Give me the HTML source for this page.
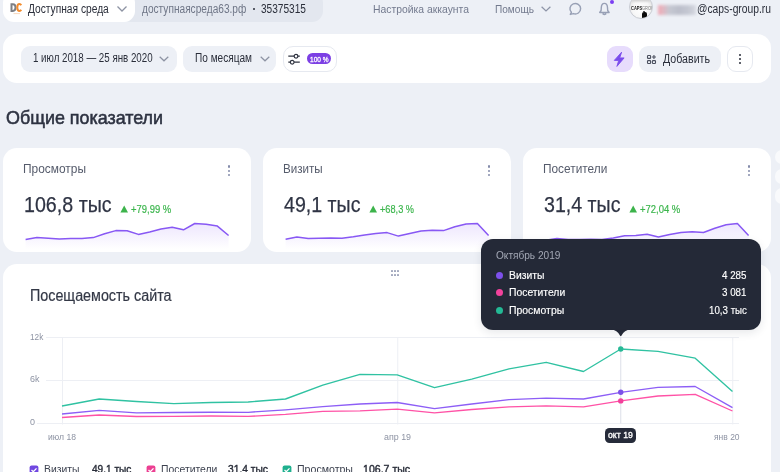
<!DOCTYPE html>
<html><head><meta charset="utf-8"><style>
html,body{margin:0;padding:0;}
body{width:780px;height:472px;overflow:hidden;position:relative;background:#edf0f6;font-family:"Liberation Sans", sans-serif;}
</style></head><body>
<div style="position:absolute;left:120px;top:-8px;width:203px;height:29.5px;background:#e3e7ef;border-radius:11px;"></div>
<div style="position:absolute;left:3px;top:-8px;width:132px;height:30.1px;background:#ffffff;border-radius:11px;"></div>
<svg style="position:absolute;left:9px;top:2px" width="16" height="14" viewBox="0 0 16 14"><path d="M2.5 2.2 H3.9 C5.7 2.2 6.5 3.6 6.5 5.55 C6.5 7.5 5.7 8.9 3.9 8.9 H2.5 Z" fill="none" stroke="#7d7f84" stroke-width="2"/><path d="M12.2 3.3 C11.8 2.5 11.2 2.1 10.4 2.1 C9 2.1 8.3 3.5 8.3 5.55 C8.3 7.6 9 9 10.4 9 C11.2 9 11.8 8.6 12.2 7.8" fill="none" stroke="#f38b2c" stroke-width="2"/><path d="M4.5 11.6 H11" stroke="#f7c9a0" stroke-width="0.7"/></svg>
<svg style="position:absolute;left:116px;top:5px" width="12" height="8" viewBox="0 0 12 8"><path d="M1.5 1.5 L6 6 L10.5 1.5" fill="none" stroke="#8d93a3" stroke-width="1.3"/></svg>
<div style="position:absolute;left:252.8px;top:7.5px;width:2.3999999999999773px;height:2.4000000000000004px;background:#2a2e3a;border-radius:2px;"></div>
<svg style="position:absolute;left:540.3px;top:5px" width="12" height="8" viewBox="0 0 12 8"><path d="M1.6 1.7 L6 6 L10.4 1.7" fill="none" stroke="#8e95a8" stroke-width="1.25"/></svg>
<svg style="position:absolute;left:0;top:0" width="780" height="30"><path d="M573.4 13.6 A5.35 5.25 0 1 0 571.4 12.3 L570.3 14.4 Z" fill="none" stroke="#98a0b5" stroke-width="1.45" stroke-linejoin="round"/></svg>
<svg style="position:absolute;left:0;top:0" width="780" height="30"><path d="M604.4 3.4 C602.3 3.4 601.4 5.3 601.3 7.6 L601.1 10.5 L599.7 12.5 L609.1 12.5 L607.7 10.5 L607.5 7.6 C607.4 5.3 606.5 3.4 604.4 3.4 Z M603 13.9 Q604.4 15.1 605.8 13.9" fill="none" stroke="#98a0b5" stroke-width="1.4" stroke-linejoin="round" stroke-linecap="round"/></svg>
<div style="position:absolute;left:610px;top:0px;width:4.399999999999977px;height:4.4px;background:#7b3ff2;border-radius:3px;"></div>
<div style="position:absolute;left:629.3px;top:-5px;width:24px;height:24px;border-radius:50%;box-sizing:border-box;border:0.8px solid #c9ccd3;background:radial-gradient(circle at 50% 60%, #ffffff 0%, #f6f6f6 50%, #d6d6d6 88%, #b8b8b8 100%);overflow:hidden"><div style="position:absolute;left:0;top:0;width:24px;height:7px;background:linear-gradient(#a8a8a8 0%,#dcdcdc 70%,rgba(255,255,255,0) 100%)"></div><div style="position:absolute;left:1px;top:9.2px;font-size:5px;font-weight:bold;color:#1a1a1a;white-space:nowrap;transform:scaleX(0.8);transform-origin:0 0;filter:blur(0.25px)">CAPS</div><div style="position:absolute;left:11.5px;top:9.4px;font-size:5px;color:#777;white-space:nowrap;transform:scaleX(0.8);transform-origin:0 0;filter:blur(0.25px)">GROUP</div><div style="position:absolute;left:13.2px;top:14.6px;width:1.6px;height:1.6px;background:#444;border-radius:50%"></div><div style="position:absolute;left:11.8px;top:16.4px;width:4.6px;height:7px;background:#0a0a0a;border-radius:2px 2px 0 0"></div></div>
<div style="position:absolute;left:658px;top:4.5px;width:38px;height:10px;background:linear-gradient(90deg,#f2a4b0 0%,#e3b3be 12%,#c4c6d0 30%,#b9bcc8 55%,#c3c6d1 80%,#d5d8e0 100%);filter:blur(1.6px);opacity:0.95"></div>
<div style="position:absolute;left:3px;top:34px;width:768px;height:49px;background:#ffffff;border-radius:14px;"></div>
<div style="position:absolute;left:21px;top:46px;width:156px;height:26px;background:#edf0f6;border-radius:9px;"></div>
<svg style="position:absolute;left:158px;top:55px" width="12" height="8" viewBox="0 0 12 8"><path d="M1.7 1.7 L6 5.8 L10.3 1.7" fill="none" stroke="#8d93a3" stroke-width="1.2"/></svg>
<div style="position:absolute;left:183.3px;top:46px;width:93.09999999999997px;height:26px;background:#edf0f6;border-radius:9px;"></div>
<svg style="position:absolute;left:258.5px;top:55px" width="12" height="8" viewBox="0 0 12 8"><path d="M1.7 1.7 L6 5.8 L10.3 1.7" fill="none" stroke="#8d93a3" stroke-width="1.2"/></svg>
<div style="position:absolute;left:283px;top:46.2px;width:54.30000000000001px;height:25.39999999999999px;background:#ffffff;border-radius:10px;box-sizing:border-box;border:1px solid #e6e9f0"></div>
<svg style="position:absolute;left:287px;top:52px" width="15" height="14" viewBox="0 0 15 14"><path d="M1.3 4.2 H12.8 M1.3 10.2 H12.8" stroke="#2f3340" stroke-width="1.2"/><circle cx="9" cy="4.2" r="1.85" fill="#fff" stroke="#2f3340" stroke-width="1.2"/><circle cx="5.2" cy="10.2" r="1.85" fill="#fff" stroke="#2f3340" stroke-width="1.2"/></svg>
<div style="position:absolute;left:306.9px;top:53.2px;width:24.30000000000001px;height:10.699999999999996px;background:#7c3fe4;border-radius:6px;"></div>
<div style="position:absolute;left:606.7px;top:45.9px;width:25.899999999999977px;height:25.699999999999996px;background:#e7dcfc;border-radius:9px;"></div>
<svg style="position:absolute;left:0;top:0" width="780" height="90"><path d="M621.6 52.2 L614.3 60.4 L618.7 60.4 L616.9 66.4 L624.1 57.9 L619.7 57.9 Z" fill="#7a4cec" stroke="#7a4cec" stroke-width="0.9" stroke-linejoin="round"/></svg>
<div style="position:absolute;left:638.5px;top:46px;width:82.10000000000002px;height:25.599999999999994px;background:#edf0f6;border-radius:9px;"></div>
<svg style="position:absolute;left:0;top:0" width="780" height="90"><g fill="none" stroke="#4a4f5e" stroke-width="1.1"><rect x="647.5" y="55.5" width="3.1" height="2.9" rx="0.7"/><rect x="647.5" y="60.6" width="3.1" height="2.9" rx="0.7"/><rect x="652.4" y="60.6" width="3.1" height="2.9" rx="0.7"/><path d="M653.95 55 V59 M651.95 57 H655.95"/></g></svg>
<div style="position:absolute;left:727.3px;top:46px;width:25.600000000000023px;height:25.5px;background:#ffffff;border-radius:9px;box-sizing:border-box;border:1px solid #e6e9f0"></div>
<div style="position:absolute;left:739.3px;top:54.1px;width:2.2000000000000455px;height:2.200000000000003px;background:#2a2e3a;border-radius:2px;"></div>
<div style="position:absolute;left:739.3px;top:58.1px;width:2.2000000000000455px;height:2.200000000000003px;background:#2a2e3a;border-radius:2px;"></div>
<div style="position:absolute;left:739.3px;top:62.3px;width:2.2000000000000455px;height:2.200000000000003px;background:#2a2e3a;border-radius:2px;"></div>
<div style="position:absolute;left:3px;top:148px;width:248px;height:104.4px;background:#ffffff;border-radius:14px;"></div>
<svg style="position:absolute;left:120.1px;top:205px" width="9" height="8" viewBox="0 0 9 8"><path d="M4.2 0.6 L8 7.4 L0.4 7.4 Z" fill="#3cb34b"/></svg>
<div style="position:absolute;left:227.9px;top:165.25px;width:2.299999999999983px;height:2.3000000000000114px;background:#858cab;border-radius:2px;"></div>
<div style="position:absolute;left:227.9px;top:169.65px;width:2.299999999999983px;height:2.3000000000000114px;background:#858cab;border-radius:2px;"></div>
<div style="position:absolute;left:227.9px;top:173.85px;width:2.299999999999983px;height:2.3000000000000114px;background:#858cab;border-radius:2px;"></div>
<svg style="position:absolute;left:0;top:0" width="780" height="472"><defs><linearGradient id="g3" x1="0" y1="0" x2="0" y2="1"><stop offset="0" stop-color="#8a5cf5" stop-opacity="0.15"/><stop offset="0.55" stop-color="#8a5cf5" stop-opacity="0.07"/><stop offset="1" stop-color="#8a5cf5" stop-opacity="0"/></linearGradient></defs><path d="M25.6 239.5 L36.9 237.6 L48.2 238.3 L59.4 238.9 L70.7 238.5 L82.0 238.4 L93.3 237.6 L104.6 233.7 L115.8 230.6 L127.1 230.7 L138.4 234.4 L149.7 232.0 L161.0 229.1 L172.2 227.2 L183.5 229.8 L194.8 223.5 L206.1 224.2 L217.4 226.1 L228.6 235.5 L228.6 249 L25.6 249 Z" fill="url(#g3)"/><path d="M25.6 239.5 L36.9 237.6 L48.2 238.3 L59.4 238.9 L70.7 238.5 L82.0 238.4 L93.3 237.6 L104.6 233.7 L115.8 230.6 L127.1 230.7 L138.4 234.4 L149.7 232.0 L161.0 229.1 L172.2 227.2 L183.5 229.8 L194.8 223.5 L206.1 224.2 L217.4 226.1 L228.6 235.5" fill="none" stroke="#8858f4" stroke-width="1.5" stroke-linejoin="round"/></svg>
<div style="position:absolute;left:263px;top:148px;width:248px;height:104.4px;background:#ffffff;border-radius:14px;"></div>
<svg style="position:absolute;left:369.0px;top:205px" width="9" height="8" viewBox="0 0 9 8"><path d="M4.2 0.6 L8 7.4 L0.4 7.4 Z" fill="#3cb34b"/></svg>
<div style="position:absolute;left:487.9px;top:165.25px;width:2.3000000000000114px;height:2.3000000000000114px;background:#858cab;border-radius:2px;"></div>
<div style="position:absolute;left:487.9px;top:169.65px;width:2.3000000000000114px;height:2.3000000000000114px;background:#858cab;border-radius:2px;"></div>
<div style="position:absolute;left:487.9px;top:173.85px;width:2.3000000000000114px;height:2.3000000000000114px;background:#858cab;border-radius:2px;"></div>
<svg style="position:absolute;left:0;top:0" width="780" height="472"><defs><linearGradient id="g263" x1="0" y1="0" x2="0" y2="1"><stop offset="0" stop-color="#8a5cf5" stop-opacity="0.15"/><stop offset="0.55" stop-color="#8a5cf5" stop-opacity="0.07"/><stop offset="1" stop-color="#8a5cf5" stop-opacity="0"/></linearGradient></defs><path d="M285.6 239.2 L296.9 237.1 L308.2 238.5 L319.4 238.3 L330.7 238.1 L342.0 238.2 L353.3 236.8 L364.6 234.9 L375.8 233.5 L387.1 232.6 L398.4 236.1 L409.7 233.5 L421.0 230.9 L432.2 230.2 L443.5 230.6 L454.8 226.8 L466.1 224.0 L477.4 223.5 L488.6 235.6 L488.6 249 L285.6 249 Z" fill="url(#g263)"/><path d="M285.6 239.2 L296.9 237.1 L308.2 238.5 L319.4 238.3 L330.7 238.1 L342.0 238.2 L353.3 236.8 L364.6 234.9 L375.8 233.5 L387.1 232.6 L398.4 236.1 L409.7 233.5 L421.0 230.9 L432.2 230.2 L443.5 230.6 L454.8 226.8 L466.1 224.0 L477.4 223.5 L488.6 235.6" fill="none" stroke="#8858f4" stroke-width="1.5" stroke-linejoin="round"/></svg>
<div style="position:absolute;left:523px;top:148px;width:248px;height:104.4px;background:#ffffff;border-radius:14px;"></div>
<svg style="position:absolute;left:629.0px;top:205px" width="9" height="8" viewBox="0 0 9 8"><path d="M4.2 0.6 L8 7.4 L0.4 7.4 Z" fill="#3cb34b"/></svg>
<div style="position:absolute;left:747.9px;top:165.25px;width:2.300000000000068px;height:2.3000000000000114px;background:#858cab;border-radius:2px;"></div>
<div style="position:absolute;left:747.9px;top:169.65px;width:2.300000000000068px;height:2.3000000000000114px;background:#858cab;border-radius:2px;"></div>
<div style="position:absolute;left:747.9px;top:173.85px;width:2.300000000000068px;height:2.3000000000000114px;background:#858cab;border-radius:2px;"></div>
<svg style="position:absolute;left:0;top:0" width="780" height="472"><defs><linearGradient id="g523" x1="0" y1="0" x2="0" y2="1"><stop offset="0" stop-color="#8a5cf5" stop-opacity="0.15"/><stop offset="0.55" stop-color="#8a5cf5" stop-opacity="0.07"/><stop offset="1" stop-color="#8a5cf5" stop-opacity="0"/></linearGradient></defs><path d="M545.6 240.3 L556.9 238.5 L568.2 239.6 L579.4 239.5 L590.7 239.2 L602.0 239.5 L613.3 238.1 L624.6 235.8 L635.8 235.5 L647.1 234.3 L658.4 237.0 L669.7 234.5 L681.0 232.5 L692.2 231.8 L703.5 232.5 L714.8 228.3 L726.1 224.7 L737.4 223.5 L748.6 235.6 L748.6 249 L545.6 249 Z" fill="url(#g523)"/><path d="M545.6 240.3 L556.9 238.5 L568.2 239.6 L579.4 239.5 L590.7 239.2 L602.0 239.5 L613.3 238.1 L624.6 235.8 L635.8 235.5 L647.1 234.3 L658.4 237.0 L669.7 234.5 L681.0 232.5 L692.2 231.8 L703.5 232.5 L714.8 228.3 L726.1 224.7 L737.4 223.5 L748.6 235.6" fill="none" stroke="#8858f4" stroke-width="1.5" stroke-linejoin="round"/></svg>
<div style="position:absolute;left:775px;top:149.5px;width:25px;height:14.300000000000011px;background:#f9fafc;border-radius:7px;"></div>
<div style="position:absolute;left:775px;top:168.6px;width:25px;height:15.0px;background:#f9fafc;border-radius:7px;"></div>
<div style="position:absolute;left:775px;top:187.8px;width:25px;height:16.5px;background:#f9fafc;border-radius:7px;"></div>
<div style="position:absolute;left:3px;top:264px;width:768px;height:256px;background:#ffffff;border-radius:14px;"></div>
<div style="position:absolute;left:391.2px;top:269.9px;width:2.0px;height:2.0px;background:#a2a8be;border-radius:0.6px;"></div>
<div style="position:absolute;left:391.2px;top:273.8px;width:2.0px;height:2.0px;background:#a2a8be;border-radius:0.6px;"></div>
<div style="position:absolute;left:394.1px;top:269.9px;width:2.0px;height:2.0px;background:#a2a8be;border-radius:0.6px;"></div>
<div style="position:absolute;left:394.1px;top:273.8px;width:2.0px;height:2.0px;background:#a2a8be;border-radius:0.6px;"></div>
<div style="position:absolute;left:397px;top:269.9px;width:2px;height:2.0px;background:#a2a8be;border-radius:0.6px;"></div>
<div style="position:absolute;left:397px;top:273.8px;width:2px;height:2.0px;background:#a2a8be;border-radius:0.6px;"></div>
<svg style="position:absolute;left:0;top:0" width="780" height="472"><path d="M46 337.5 H739" stroke="#edeff4" stroke-width="1"/><path d="M46 380.5 H739" stroke="#edeff4" stroke-width="1"/><path d="M37 423.5 H739" stroke="#edeff4" stroke-width="1"/><path d="M62.50 337 V424.5" stroke="#edeff4" stroke-width="1"/><path d="M397.75 337 V424.5" stroke="#edeff4" stroke-width="1"/><path d="M732.75 337 V424.5" stroke="#edeff4" stroke-width="1"/><path d="M620.75 337 V423.5" stroke="#dcdfe8" stroke-width="1"/><path d="M62.0 406.0 L99.2 399.0 L136.5 401.5 L173.8 403.6 L211.0 402.5 L248.2 402.0 L285.5 399.0 L322.8 385.2 L360.0 374.4 L397.2 374.8 L434.5 387.7 L471.8 379.2 L509.0 368.8 L546.2 362.3 L583.5 371.5 L620.8 349.0 L658.0 351.3 L695.2 358.2 L732.5 391.6" fill="none" stroke="#30c2a2" stroke-width="1.35" stroke-linejoin="round"/><path d="M62.0 414.0 L99.2 410.4 L136.5 412.8 L173.8 412.5 L211.0 412.2 L248.2 412.3 L285.5 409.8 L322.8 406.6 L360.0 404.0 L397.2 402.5 L434.5 408.6 L471.8 404.0 L509.0 399.6 L546.2 398.2 L583.5 399.0 L620.8 392.3 L658.0 387.4 L695.2 386.5 L732.5 407.7" fill="none" stroke="#8d5ef6" stroke-width="1.35" stroke-linejoin="round"/><path d="M62.0 417.5 L99.2 415.0 L136.5 416.5 L173.8 416.3 L211.0 416.0 L248.2 416.4 L285.5 414.4 L322.8 411.3 L360.0 410.9 L397.2 409.2 L434.5 412.9 L471.8 409.5 L509.0 406.8 L546.2 405.8 L583.5 406.8 L620.8 400.9 L658.0 396.0 L695.2 394.3 L732.5 411.0" fill="none" stroke="#ff52a6" stroke-width="1.35" stroke-linejoin="round"/><circle cx="620.75" cy="349.0" r="2.7" fill="#27b996"/><circle cx="620.75" cy="392.3" r="2.7" fill="#7c50e8"/><circle cx="620.75" cy="400.9" r="2.7" fill="#f2409b"/></svg>
<div style="position:absolute;left:605.2px;top:428.1px;width:31.299999999999955px;height:14.899999999999977px;background:#262b3a;border-radius:4.5px;"></div>
<svg style="position:absolute;left:29.2px;top:465px" width="10" height="10" viewBox="0 0 10 10"><rect x="0.6" y="0.6" width="8.8" height="8.8" rx="2" fill="#7047e0"/><path d="M2.5 5 L4.3 6.7 L7.5 3.4" fill="none" stroke="#fff" stroke-width="1.3"/></svg>
<svg style="position:absolute;left:145.8px;top:465px" width="10" height="10" viewBox="0 0 10 10"><rect x="0.6" y="0.6" width="8.8" height="8.8" rx="2" fill="#ec3f92"/><path d="M2.5 5 L4.3 6.7 L7.5 3.4" fill="none" stroke="#fff" stroke-width="1.3"/></svg>
<svg style="position:absolute;left:281.5px;top:465px" width="10" height="10" viewBox="0 0 10 10"><rect x="0.6" y="0.6" width="8.8" height="8.8" rx="2" fill="#1fb08e"/><path d="M2.5 5 L4.3 6.7 L7.5 3.4" fill="none" stroke="#fff" stroke-width="1.3"/></svg>
<div style="position:absolute;left:481.4px;top:238.5px;width:280px;height:91.4px;background:#242937;border-radius:12px;box-shadow:0 3px 8px rgba(30,35,60,0.10)"></div>
<svg style="position:absolute;left:0;top:0" width="780" height="472"><path d="M610.8 329.4 Q617.4 329.9 619.8 335.3 Q620.75 337.2 621.7 335.3 Q624.1 329.9 630.7 329.4 Z" fill="#242937"/></svg>
<div style="position:absolute;left:495.8px;top:271.8px;width:7.0px;height:7.0px;background:#7d50ea;border-radius:4px;"></div>
<div style="position:absolute;left:495.8px;top:289.2px;width:7.0px;height:7.0px;background:#f2429c;border-radius:4px;"></div>
<div style="position:absolute;left:495.8px;top:306.9px;width:7.0px;height:7.0px;background:#23b995;border-radius:4px;"></div>
<div style="position:absolute;left:27.9px;top:3px;font-size:12px;line-height:12px;font-weight:400;color:#2a2e3a;white-space:nowrap;transform:scaleX(0.8508);transform-origin:0 0;">Доступная среда</div>
<div style="position:absolute;left:141.7px;top:3px;font-size:12px;line-height:12px;font-weight:400;color:#6f7687;white-space:nowrap;transform:scaleX(0.8439);transform-origin:0 0;">доступнаясреда63.рф</div>
<div style="position:absolute;left:261px;top:3px;font-size:12px;line-height:12px;font-weight:400;color:#2a2e3a;white-space:nowrap;transform:scaleX(0.8428);transform-origin:0 0;">35375315</div>
<div style="position:absolute;left:372.7px;top:4px;font-size:11.5px;line-height:11.5px;font-weight:400;color:#737a8e;white-space:nowrap;transform:scaleX(0.9021);transform-origin:0 0;">Настройка аккаунта</div>
<div style="position:absolute;left:495px;top:4px;font-size:11.5px;line-height:11.5px;font-weight:400;color:#737a8e;white-space:nowrap;transform:scaleX(0.8779);transform-origin:0 0;">Помощь</div>
<div style="position:absolute;left:696.5px;top:3px;font-size:12px;line-height:12px;font-weight:400;color:#2a2e3a;white-space:nowrap;transform:scaleX(0.8581);transform-origin:0 0;">@caps-group.ru</div>
<div style="position:absolute;left:32.7px;top:52px;font-size:12px;line-height:12px;font-weight:400;color:#2a2e3a;white-space:nowrap;transform:scaleX(0.8116);transform-origin:0 0;">1 июл 2018 — 25 янв 2020</div>
<div style="position:absolute;left:195px;top:52px;font-size:12px;line-height:12px;font-weight:400;color:#2a2e3a;white-space:nowrap;transform:scaleX(0.8400);transform-origin:0 0;">По месяцам</div>
<div style="position:absolute;left:309.8px;top:56px;font-size:8px;line-height:8px;font-weight:400;color:#ffffff;white-space:nowrap;transform:scaleX(0.8154);transform-origin:0 0;-webkit-text-stroke:0.3px #ffffff;">100 %</div>
<div style="position:absolute;left:663px;top:53px;font-size:12px;line-height:12px;font-weight:400;color:#2a2e3a;white-space:nowrap;transform:scaleX(0.8860);transform-origin:0 0;">Добавить</div>
<div style="position:absolute;left:6px;top:108px;font-size:19px;line-height:19px;font-weight:400;color:#2d3241;white-space:nowrap;transform:scaleX(0.9419);transform-origin:0 0;-webkit-text-stroke:0.55px #2d3241;">Общие показатели</div>
<div style="position:absolute;left:23.2px;top:163px;font-size:12.5px;line-height:12.5px;font-weight:400;color:#555b6b;white-space:nowrap;transform:scaleX(0.9534);transform-origin:0 0;">Просмотры</div>
<div style="position:absolute;left:24.2px;top:194px;font-size:22.5px;line-height:22.5px;font-weight:400;color:#2f3444;white-space:nowrap;transform:scaleX(0.8734);transform-origin:0 0;-webkit-text-stroke:0.25px #2f3444;">106,8 тыс</div>
<div style="position:absolute;left:130.6px;top:204px;font-size:11.5px;line-height:11.5px;font-weight:400;color:#3bb54c;white-space:nowrap;transform:scaleX(0.8217);transform-origin:0 0;-webkit-text-stroke:0.2px #3bb54c;">+79,99 %</div>
<div style="position:absolute;left:283.2px;top:163px;font-size:12.5px;line-height:12.5px;font-weight:400;color:#555b6b;white-space:nowrap;transform:scaleX(0.9287);transform-origin:0 0;">Визиты</div>
<div style="position:absolute;left:284.2px;top:194px;font-size:22.5px;line-height:22.5px;font-weight:400;color:#2f3444;white-space:nowrap;transform:scaleX(0.8715);transform-origin:0 0;-webkit-text-stroke:0.25px #2f3444;">49,1 тыс</div>
<div style="position:absolute;left:379.5px;top:204px;font-size:11.5px;line-height:11.5px;font-weight:400;color:#3bb54c;white-space:nowrap;transform:scaleX(0.7994);transform-origin:0 0;-webkit-text-stroke:0.2px #3bb54c;">+68,3 %</div>
<div style="position:absolute;left:543.2px;top:163px;font-size:12.5px;line-height:12.5px;font-weight:400;color:#555b6b;white-space:nowrap;transform:scaleX(0.9478);transform-origin:0 0;">Посетители</div>
<div style="position:absolute;left:544.2px;top:194px;font-size:22.5px;line-height:22.5px;font-weight:400;color:#2f3444;white-space:nowrap;transform:scaleX(0.8715);transform-origin:0 0;-webkit-text-stroke:0.25px #2f3444;">31,4 тыс</div>
<div style="position:absolute;left:639.5px;top:204px;font-size:11.5px;line-height:11.5px;font-weight:400;color:#3bb54c;white-space:nowrap;transform:scaleX(0.8238);transform-origin:0 0;-webkit-text-stroke:0.2px #3bb54c;">+72,04 %</div>
<div style="position:absolute;left:30.3px;top:288px;font-size:16px;line-height:16px;font-weight:400;color:#333846;white-space:nowrap;transform:scaleX(0.8947);transform-origin:0 0;-webkit-text-stroke:0.2px #333846;">Посещаемость сайта</div>
<div style="position:absolute;left:30px;top:332px;font-size:9.5px;line-height:9.5px;font-weight:400;color:#8d93a3;white-space:nowrap;transform:scaleX(0.8677);transform-origin:0 0;">12k</div>
<div style="position:absolute;left:30px;top:374px;font-size:9.5px;line-height:9.5px;font-weight:400;color:#8d93a3;white-space:nowrap;transform:scaleX(0.9456);transform-origin:0 0;">6k</div>
<div style="position:absolute;left:30px;top:417px;font-size:9.5px;line-height:9.5px;font-weight:400;color:#8d93a3;white-space:nowrap;transform:scaleX(0.9440);transform-origin:0 0;">0</div>
<div style="position:absolute;left:48.4px;top:432px;font-size:9.5px;line-height:9.5px;font-weight:400;color:#8d93a3;white-space:nowrap;transform:scaleX(0.9037);transform-origin:0 0;">июл 18</div>
<div style="position:absolute;left:384.4px;top:432px;font-size:9.5px;line-height:9.5px;font-weight:400;color:#8d93a3;white-space:nowrap;transform:scaleX(0.9335);transform-origin:0 0;">апр 19</div>
<div style="position:absolute;left:608.3px;top:430px;font-size:9.5px;line-height:9.5px;font-weight:400;color:#ffffff;white-space:nowrap;transform:scaleX(0.9148);transform-origin:0 0;-webkit-text-stroke:0.35px #ffffff;">окт 19</div>
<div style="position:absolute;left:714.4px;top:432px;font-size:9.5px;line-height:9.5px;font-weight:400;color:#8d93a3;white-space:nowrap;transform:scaleX(0.8933);transform-origin:0 0;">янв 20</div>
<div style="position:absolute;left:44.2px;top:464px;font-size:11px;line-height:11px;font-weight:400;color:#3d4250;white-space:nowrap;transform:scaleX(0.9409);transform-origin:0 0;">Визиты</div>
<div style="position:absolute;left:91.6px;top:464px;font-size:11px;line-height:11px;font-weight:400;color:#2a2e3a;white-space:nowrap;transform:scaleX(0.9156);transform-origin:0 0;-webkit-text-stroke:0.4px #2a2e3a;">49,1 тыс</div>
<div style="position:absolute;left:161px;top:464px;font-size:11px;line-height:11px;font-weight:400;color:#3d4250;white-space:nowrap;transform:scaleX(0.9447);transform-origin:0 0;">Посетители</div>
<div style="position:absolute;left:227.7px;top:464px;font-size:11px;line-height:11px;font-weight:400;color:#2a2e3a;white-space:nowrap;transform:scaleX(0.9319);transform-origin:0 0;-webkit-text-stroke:0.4px #2a2e3a;">31,4 тыс</div>
<div style="position:absolute;left:297px;top:464px;font-size:11px;line-height:11px;font-weight:400;color:#3d4250;white-space:nowrap;transform:scaleX(0.9629);transform-origin:0 0;">Просмотры</div>
<div style="position:absolute;left:362.6px;top:464px;font-size:11px;line-height:11px;font-weight:400;color:#2a2e3a;white-space:nowrap;transform:scaleX(0.9606);transform-origin:0 0;-webkit-text-stroke:0.4px #2a2e3a;">106,7 тыс</div>
<div style="position:absolute;left:496.4px;top:250px;font-size:11px;line-height:11px;font-weight:400;color:#a3a8b5;white-space:nowrap;transform:scaleX(0.9177);transform-origin:0 0;">Октябрь 2019</div>
<div style="position:absolute;left:509px;top:270px;font-size:11px;line-height:11px;font-weight:400;color:#ffffff;white-space:nowrap;transform:scaleX(0.9409);transform-origin:0 0;-webkit-text-stroke:0.15px #ffffff;">Визиты</div>
<div style="position:absolute;left:722.0px;top:270px;font-size:11px;line-height:11px;font-weight:400;color:#ffffff;white-space:nowrap;transform:scaleX(0.8899);transform-origin:0 0;-webkit-text-stroke:0.15px #ffffff;">4 285</div>
<div style="position:absolute;left:509px;top:287px;font-size:11px;line-height:11px;font-weight:400;color:#ffffff;white-space:nowrap;transform:scaleX(0.9413);transform-origin:0 0;-webkit-text-stroke:0.15px #ffffff;">Посетители</div>
<div style="position:absolute;left:722.0px;top:287px;font-size:11px;line-height:11px;font-weight:400;color:#ffffff;white-space:nowrap;transform:scaleX(0.8899);transform-origin:0 0;-webkit-text-stroke:0.15px #ffffff;">3 081</div>
<div style="position:absolute;left:509px;top:305px;font-size:11px;line-height:11px;font-weight:400;color:#ffffff;white-space:nowrap;transform:scaleX(0.9492);transform-origin:0 0;-webkit-text-stroke:0.15px #ffffff;">Просмотры</div>
<div style="position:absolute;left:708.5px;top:305px;font-size:11px;line-height:11px;font-weight:400;color:#ffffff;white-space:nowrap;transform:scaleX(0.8853);transform-origin:0 0;-webkit-text-stroke:0.15px #ffffff;">10,3 тыс</div>
</body></html>
